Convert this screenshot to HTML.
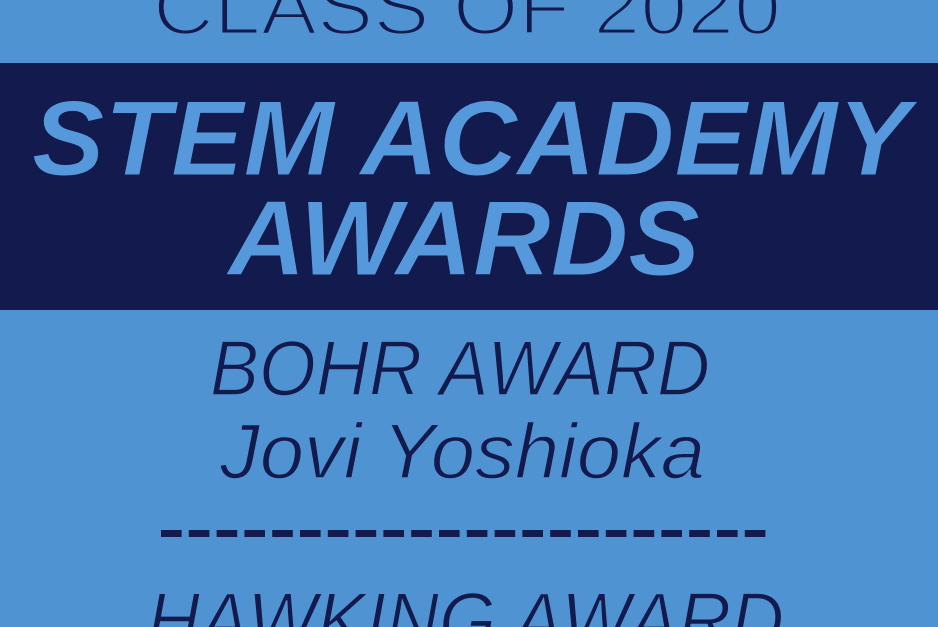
<!DOCTYPE html>
<html><head><meta charset="utf-8"><style>
html,body{margin:0;padding:0;background:#5093d3;width:938px;height:627px;overflow:hidden;}
svg{display:block}
</style></head><body>
<svg width="938" height="627" viewBox="0 0 938 627" xmlns="http://www.w3.org/2000/svg">
<rect width="938" height="627" fill="#5093d3"/>
<rect x="0" y="63" width="938" height="247" fill="#131a4d"/>
<g font-family="Liberation Sans, sans-serif" fill="#131a4d" stroke="#5093d3">
<text x="153" y="34" font-size="78" stroke-width="3" textLength="628" lengthAdjust="spacingAndGlyphs">CLASS OF 2020</text>
<text x="210" y="395" font-size="78" stroke-width="1.5" font-style="italic" textLength="500" lengthAdjust="spacingAndGlyphs">BOHR AWARD</text>
<text x="220" y="478" font-size="78" stroke-width="1.5" font-style="italic" textLength="485" lengthAdjust="spacingAndGlyphs">Jovi Yoshioka</text>
<text x="147" y="647" font-size="78" stroke-width="1.5" font-style="italic" textLength="637" lengthAdjust="spacingAndGlyphs">HAWKING AWARD</text>
</g>
<g font-family="Liberation Sans, sans-serif" font-weight="bold" font-style="italic" fill="#5698dc" stroke="#131a4d" stroke-width="1">
<text x="32" y="175" font-size="107" textLength="878" lengthAdjust="spacingAndGlyphs">STEM ACADEMY</text>
<text x="228" y="275" font-size="107" textLength="472" lengthAdjust="spacingAndGlyphs">AWARDS</text>
</g>
<line x1="161" y1="533.5" x2="772" y2="533.5" stroke="#131a4d" stroke-width="7" stroke-dasharray="20.6 7.2"/>
</svg>
</body></html>
